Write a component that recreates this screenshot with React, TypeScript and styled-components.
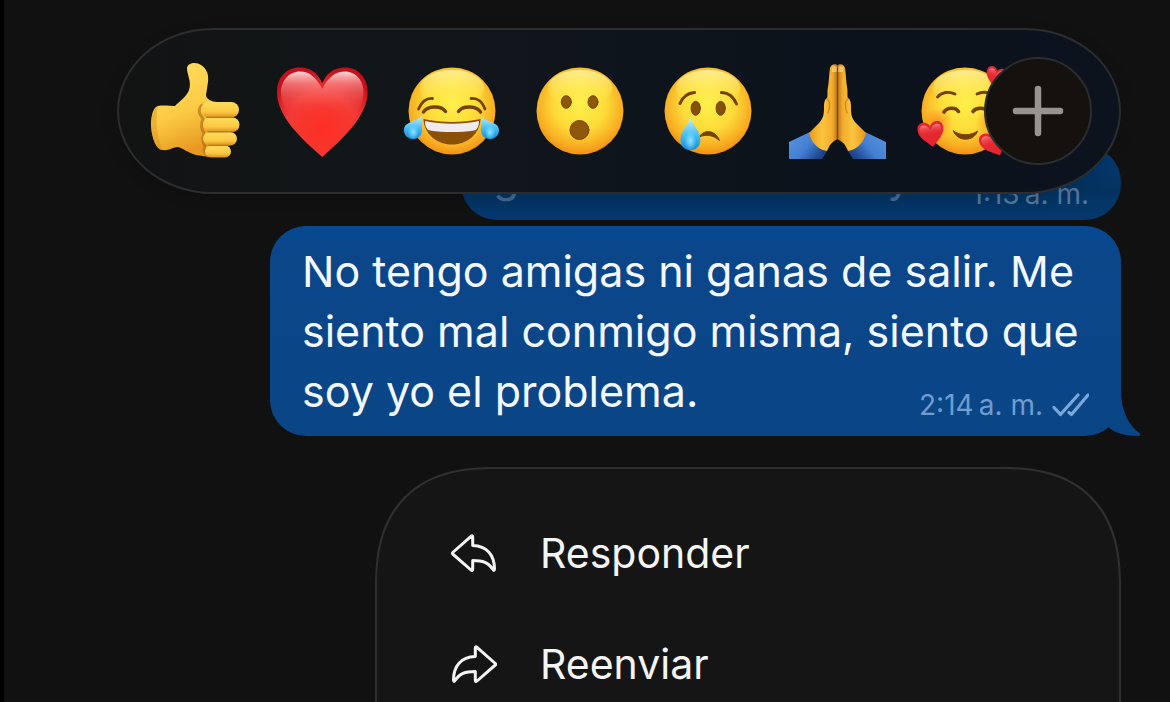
import React from "react";
import styled, { createGlobalStyle } from "styled-components";

const GlobalStyle = createGlobalStyle`
  * { box-sizing: border-box; }
  body { margin: 0; background: #111111; overflow: hidden; }
`;

const Screen = styled.main`
  display: flex;
  flex-direction: column;
  align-items: flex-end;
  height: 100vh;
  padding: 28px 49px 0 24px;
  overflow: hidden;
  border-left: 4px solid #000000;
  background: #111111;
  font-family: Inter, "Liberation Sans", sans-serif;
`;

const ReactionBar = styled.div`
  position: relative;
  z-index: 1;
  flex: none;
  display: flex;
  justify-content: space-between;
  align-items: center;
  width: 100%;
  max-width: 1004px;
  height: 166px;
  padding: 0 106px 0 28px;
  border: 2px solid #2b2d2f;
  border-radius: 96px / 83px;
  background: linear-gradient(90deg, #131313 0%, #111618 22%, #0f151b 45%, #0c121b 75%, #0c131e 100%);
  box-shadow: 0 4px 16px rgba(0, 0, 0, 0.15);
`;

const ReactionButton = styled.button`
  flex: none;
  width: 96px;
  height: 96px;
  padding: 0;
  border: 0;
  background: none;
  svg { display: block; overflow: visible; }
`;

const MoreButton = styled.button`
  position: absolute;
  top: 27px;
  right: 27px;
  display: grid;
  place-items: center;
  width: 108px;
  height: 108px;
  padding: 0;
  border: 2px solid #2c2c2e;
  border-radius: 50%;
  background: #14110f;
`;

const Bubble = styled.article<{ $behind?: boolean }>`
  position: relative;
  flex: none;
  display: flex;
  align-items: flex-end;
  justify-content: space-between;
  width: 100%;
  max-width: ${(p) => (p.$behind ? "660px" : "851px")};
  margin-top: ${(p) => (p.$behind ? "-48px" : "6px")};
  padding: ${(p) => (p.$behind ? "0 32px 10px" : "15px 32px")};
  border-radius: 36px;
  background: ${(p) =>
    p.$behind
      ? "linear-gradient(180deg, #053a75 0, #04335f 60%, #04386f 100%)"
      : "linear-gradient(180deg, #054a93 0, #0b468a 24px, #0a4586 100%)"};
  color: #f3f8ff;
`;

const MessageText = styled.p`
  flex: 1;
  margin: 0;
  font-size: 43px;
  line-height: 60px;
`;

const PreviousText = styled(MessageText)`
  display: flex;
  justify-content: space-between;
  margin-bottom: 4px;
  padding-right: 60px;
  color: #44688f;
`;

const Stamp = styled.span<{ $dim?: boolean }>`
  float: right;
  display: flex;
  align-items: center;
  gap: 8px;
  margin-top: ${(p) => (p.$dim ? "0" : "28px")};
  height: 32px;
  font-size: 28px;
  line-height: 32px;
  white-space: nowrap;
  color: ${(p) => (p.$dim ? "#53779f" : "#6f9dcf")};
`;

const Tail = styled.svg`
  position: absolute;
  right: -20px;
  bottom: 0;
`;

const Menu = styled.nav`
  flex: none;
  display: flex;
  flex-direction: column;
  width: 100%;
  max-width: 746px;
  min-height: 480px;
  margin-top: 31px;
  padding: 28px 0;
  border: 2px solid #303030;
  border-radius: 96px;
  background: #151515;
  @supports (corner-shape: superellipse(1.3)) {
    border-radius: 120px;
    corner-shape: superellipse(1.3);
  }
`;

const MenuItem = styled.button`
  display: flex;
  align-items: center;
  gap: 43px;
  height: 111px;
  padding: 0 72px;
  border: 0;
  background: none;
  color: #f5f5f5;
  font-family: inherit;
  font-size: 41px;
  line-height: 52px;
  text-align: left;
`;

const HiddenDefs = styled.svg`
  position: absolute;
`;

const Defs = () => (
  <HiddenDefs width="0" height="0" aria-hidden="true">
    <defs>
      <radialGradient id="face" cx="50%" cy="42%" r="60%">
        <stop offset="0" stopColor="#fff04a" />
        <stop offset="0.5" stopColor="#fddb38" />
        <stop offset="0.82" stopColor="#f8ad22" />
        <stop offset="1" stopColor="#ee8a12" />
      </radialGradient>
      <linearGradient id="shine" x1="0" y1="0" x2="0" y2="1">
        <stop offset="0" stopColor="#fff6a8" stopOpacity="0.8" />
        <stop offset="1" stopColor="#fff04a" stopOpacity="0" />
      </linearGradient>
      <linearGradient id="tear" x1="0" y1="0" x2="0" y2="1">
        <stop offset="0" stopColor="#c8f2ff" />
        <stop offset="0.55" stopColor="#45bdf5" />
        <stop offset="1" stopColor="#1489dd" />
      </linearGradient>
      <radialGradient id="tearGlow" cx="50%" cy="72%" r="30%">
        <stop offset="0" stopColor="#8be6ff" />
        <stop offset="1" stopColor="#8be6ff" stopOpacity="0" />
      </radialGradient>
      <radialGradient id="heart" cx="50%" cy="68%" r="66%">
        <stop offset="0" stopColor="#ff2c20" />
        <stop offset="0.6" stopColor="#f23a35" />
        <stop offset="1" stopColor="#c4101a" />
      </radialGradient>
      <linearGradient id="gloss" x1="0" y1="0" x2="0" y2="1">
        <stop offset="0" stopColor="#ffe0e0" stopOpacity="0.95" />
        <stop offset="0.16" stopColor="#ff9a98" stopOpacity="0.65" />
        <stop offset="0.5" stopColor="#f84a44" stopOpacity="0.1" />
        <stop offset="1" stopColor="#f84a44" stopOpacity="0" />
      </linearGradient>
      <linearGradient id="skin" x1="0" y1="0" x2="0.3" y2="1">
        <stop offset="0" stopColor="#ffdf62" />
        <stop offset="0.6" stopColor="#fccb45" />
        <stop offset="1" stopColor="#e89a20" />
      </linearGradient>
      <linearGradient id="finger" x1="0" y1="0" x2="0" y2="1">
        <stop offset="0" stopColor="#ffdc5c" />
        <stop offset="0.65" stopColor="#fbc843" />
        <stop offset="1" stopColor="#d98f1c" />
      </linearGradient>
      <linearGradient id="palm" x1="0" y1="0" x2="1" y2="0">
        <stop offset="0" stopColor="#e8981f" />
        <stop offset="0.45" stopColor="#fcc53e" />
        <stop offset="0.8" stopColor="#f3ad2e" />
        <stop offset="1" stopColor="#b87014" />
      </linearGradient>
      <linearGradient id="sleeve" x1="0" y1="0" x2="1" y2="0.6">
        <stop offset="0" stopColor="#5a97e4" />
        <stop offset="0.6" stopColor="#437ed0" />
        <stop offset="1" stopColor="#1c428c" />
      </linearGradient>
      <radialGradient id="blush">
        <stop offset="0" stopColor="#fb7c1c" stopOpacity="0.7" />
        <stop offset="1" stopColor="#fb7c1c" stopOpacity="0" />
      </radialGradient>
    </defs>
  </HiddenDefs>
);

const Picture = ({ children }: { children: React.ReactNode }) => (
  <svg width="96" height="96" viewBox="0 0 96 96" fill="none" strokeLinecap="round" aria-hidden="true">
    {children}
  </svg>
);

const FaceBase = () => (
  <>
    <circle cx="48" cy="48" r="43.5" fill="url(#face)" />
    <ellipse cx="48" cy="25" rx="32" ry="18" fill="url(#shine)" />
  </>
);

const brown = "#754107";

const ThumbsUp = () => (
  <Picture>
    <path
      d="M11 43C16 42 23 43 28 43C33 38 40 33 42 27C45 19 40 12 40 5C41-1 50-1 54 2C60 6 62 12 61 19L59 32C59 36 65 39 70 39L76 60L74 93C66 95 56 93 49 92C41 90 36 85 31 84C26 84 22 88 15 87C8 86 4 71 4 61C4 54 6 44 11 43Z"
      fill="url(#skin)"
    />
    <path d="M11 43C5 46 2 60 6 74C8 81 11 87 16 87C10 77 8 56 11 43Z" fill="#dc931f" opacity=".45" />
    <path d="M55 42C49 49 54 52 56 56C54 61 54 66 57 70C55 75 56 81 58 83C56 87 58 91 61 93" stroke="#a96a12" strokeWidth="3" opacity=".6" />
    <rect x="54" y="39" width="38" height="15.5" rx="7.7" fill="url(#finger)" />
    <rect x="56" y="54.5" width="36.5" height="14.5" rx="7.2" fill="url(#finger)" />
    <rect x="56" y="69" width="34" height="13.5" rx="6.7" fill="url(#finger)" />
    <rect x="58" y="82.5" width="26" height="12" rx="6" fill="url(#finger)" />
    <path d="M60 54.4H86M61 68.8H86M62 82.3H82" stroke="#b87716" strokeWidth="1.3" />
  </Picture>
);

const Heart = () => (
  <Picture>
    <path d="M47.3 20C42 9 35 4.5 25 4.5C11 4.5 2 15 2 29C2 49 18 69 47.3 94C76 69 92.6 49 92.6 29C92.6 15 83 4.5 70 4.5C60 4.5 52 9 47.3 20Z" fill="url(#heart)" />
    <path d="M47.3 26C41 14 34 8.5 25 8.5C14 8.5 6 18 6 29C6 46 20 65 47.3 88C74 65 88.6 46 88.6 29C88.6 18 81 8.5 70 8.5C61 8.5 53 14 47.3 26Z" fill="url(#gloss)" />
  </Picture>
);

const Tear = ({ x, y, r, tipX, tipY }: { x: number; y: number; r: number; tipX: number; tipY: number }) => {
  const d = `M${tipX} ${tipY}C${tipX + (x - tipX) / 3 - 1} ${tipY + 7} ${x - r} ${y - r} ${x - r} ${y}C${x - r} ${y + r * 1.35} ${x + r} ${y + r * 1.35} ${x + r} ${y}C${x + r} ${y - r} ${tipX + 1} ${tipY + 7} ${tipX} ${tipY}Z`;
  return (
    <>
      <path d={d} fill="url(#tear)" />
      <path d={d} fill="url(#tearGlow)" />
    </>
  );
};

const Joy = () => (
  <Picture>
    <FaceBase />
    <path d="M19.5 56C38 60 58 60 76.5 56C76 71 63 81.5 48 81.5C33 81.5 20 71 19.5 56Z" fill="#8b5008" />
    <path d="M21 58C38 61.5 58 61.5 75 58C75 64 73 67 70 67.5C56 69.5 40 69.5 26 67.5C23 67 21 64 21 58Z" fill="#eeeaf0" />
    <path d="M19.5 49C23 43 37 42 41.5 48.5M54.5 48.5C59 42 73 43 76.5 49" stroke={brown} strokeWidth="3.4" />
    <path d="M14.5 46C18 38 22 35 28.5 35.5M67 35.5C74 35 78 38 81 46" stroke={brown} strokeWidth="2.8" />
    <Tear x={9} y={67} r={9} tipX={18} tipY={52} />
    <Tear x={86} y={67} r={9} tipX={77} tipY={52} />
  </Picture>
);

const Surprised = () => (
  <Picture>
    <FaceBase />
    <g fill="#8f5709" stroke={brown} strokeWidth="1">
      <ellipse cx="34.3" cy="39" rx="5" ry="6.3" />
      <ellipse cx="61" cy="39" rx="5" ry="6.3" />
      <circle cx="47.5" cy="67" r="9.5" />
    </g>
  </Picture>
);

const Crying = () => (
  <Picture>
    <FaceBase />
    <g fill="#85500a" stroke={brown} strokeWidth="1">
      <ellipse cx="35.7" cy="45.3" rx="4.6" ry="7" />
      <ellipse cx="60.7" cy="45.3" rx="4.6" ry="7" />
    </g>
    <path d="M20 40.5C23 33 28 30 34.5 29.5M61.5 29.5C69 30 73 33 76.5 41" stroke={brown} strokeWidth="3" />
    <path d="M39 74C45 65 56 68 59.5 77.5C53 72 46 71 39 74Z" fill={brown} stroke={brown} strokeWidth="1" strokeLinejoin="round" />
    <Tear x={30.4} y={77} r={10} tipX={30.4} tipY={54} />
  </Picture>
);

const PrayingHalf = () => (
  <>
    <path d="M0 79L21 69C22 78 29 86 38 88L33 96H0Z" fill="url(#sleeve)" />
    <path d="M49 3C47 0 42 1 41 5C40 12 40 18 39 24C38 29 39 34 38 35C35 37 35 41 35 45C35 52 34 55 31 59L20 70C22 79 29 87 38 88C40 84 41 81 44 79C46 77 49 77 49 74Z" fill="url(#palm)" />
    <path d="M38 36C41 38 41 44 39 50" stroke="#d08a1c" strokeWidth="1.4" />
    <path d="M43 5C44 2.5 47 2.5 48 5V9H43Z" fill="#ffe090" opacity=".6" />
  </>
);

const Praying = () => (
  <Picture>
    <PrayingHalf />
    <g transform="translate(97 0) scale(-1 1)">
      <PrayingHalf />
    </g>
    <path d="M48.5 5V75" stroke="#7a4508" strokeWidth="1.3" />
  </Picture>
);

const SmallHeart = ({ transform }: { transform: string }) => (
  <g transform={transform}>
    <path d="M0-7C-3-13-13-13-13-4C-13 3-6 8 0 14C6 8 13 3 13-4C13-13 3-13 0-7Z" fill="#e3262f" />
    <path d="M0-3C-4-11-11-9-11-4C-11 2-5 6 0 11C5 6 11 2 11-4C11-9 4-11 0-3Z" fill="url(#gloss)" opacity=".55" />
  </g>
);

const Adoring = () => (
  <Picture>
    <FaceBase />
    <circle cx="21" cy="59" r="15" fill="url(#blush)" />
    <circle cx="74" cy="59" r="15" fill="url(#blush)" />
    <path d="M20.5 34C25 29 32 28 38 31M60 31C66 28 72 29 77 34" stroke={brown} strokeWidth="2.8" />
    <path d="M27 49C30 44 39 44 41.5 48.5M56 48.5C59 44 68 44 71 49" stroke={brown} strokeWidth="3.6" />
    <path d="M36.5 68C43 73 54 73 60.5 68C57 79 40 79 36.5 68Z" fill={brown} stroke={brown} strokeWidth="1" />
    <SmallHeart transform="translate(14 70) rotate(-8)" />
    <SmallHeart transform="translate(79 13) rotate(14) scale(.78)" />
    <SmallHeart transform="translate(77 79) rotate(-24) scale(1.05)" />
  </Picture>
);

const reactions = [
  { label: "Me gusta", Icon: ThumbsUp },
  { label: "Me encanta", Icon: Heart },
  { label: "Risa", Icon: Joy },
  { label: "Sorpresa", Icon: Surprised },
  { label: "Tristeza", Icon: Crying },
  { label: "Gracias", Icon: Praying },
  { label: "Cariño", Icon: Adoring },
];

const PlusIcon = () => (
  <svg width="52" height="52" viewBox="0 0 52 52" aria-hidden="true">
    <path d="M26 4V48M4 26H48" stroke="#969390" strokeWidth="6.5" strokeLinecap="round" />
  </svg>
);

const ReadTicks = () => (
  <svg width="38" height="26" viewBox="0 0 38 26" fill="none" aria-hidden="true">
    <path d="M3 15.5L9.5 22.5L27 3M18 20.5L20.5 22.5L37 3" stroke="#79a8da" strokeWidth="3.2" strokeLinecap="round" strokeLinejoin="round" />
  </svg>
);

const ArrowIcon = ({ flipped }: { flipped?: boolean }) => (
  <svg width="48" height="40" viewBox="0 0 48 40" fill="none" aria-hidden="true">
    <path
      transform={flipped ? "translate(50 0) scale(-1 1)" : undefined}
      d="M3.7 19.5L22 3.3Q23.7 2 23.7 4V12.5C38 13 45.5 22 45.5 36Q45.3 38.5 44 36.5C39.5 29.5 34 27.5 23.7 27.5V36Q23.7 38.5 22 37L3.7 21Q3 20.3 3.7 19.5Z"
      stroke="#f5f5f5"
      strokeWidth="3"
      strokeLinejoin="round"
    />
  </svg>
);

export default function App() {
  return (
    <>
      <GlobalStyle />
      <Defs />
      <Screen>
        <ReactionBar>
          {reactions.map(({ label, Icon }) => (
            <ReactionButton key={label} type="button" aria-label={label}>
              <Icon />
            </ReactionButton>
          ))}
          <MoreButton type="button" aria-label="Más reacciones">
            <PlusIcon />
          </MoreButton>
        </ReactionBar>

        <Bubble $behind>
          <PreviousText>
            <span>g</span>
            <span>y</span>
          </PreviousText>
          <Stamp $dim>1:13&#8201;a. m.</Stamp>
        </Bubble>

        <Bubble>
          <MessageText>
            <span>No tengo amigas ni ganas de salir. Me siento mal conmigo misma, siento que</span>{" "}
            <span>soy yo el problema.</span>
            <Stamp>
              <time>2:14&#8201;a. m.</time>
              <ReadTicks />
            </Stamp>
          </MessageText>
          <Tail width="40" height="46" viewBox="0 0 40 46" aria-hidden="true">
            <path d="M20 0C20 20 27 35 39 43.5Q40 46 37 46C24 46 14 43 7 37L0 10V0Z" fill="#0a4586" />
          </Tail>
        </Bubble>

        <Menu>
          <MenuItem type="button">
            <ArrowIcon />
            Responder
          </MenuItem>
          <MenuItem type="button">
            <ArrowIcon flipped />
            Reenviar
          </MenuItem>
        </Menu>
      </Screen>
    </>
  );
}
